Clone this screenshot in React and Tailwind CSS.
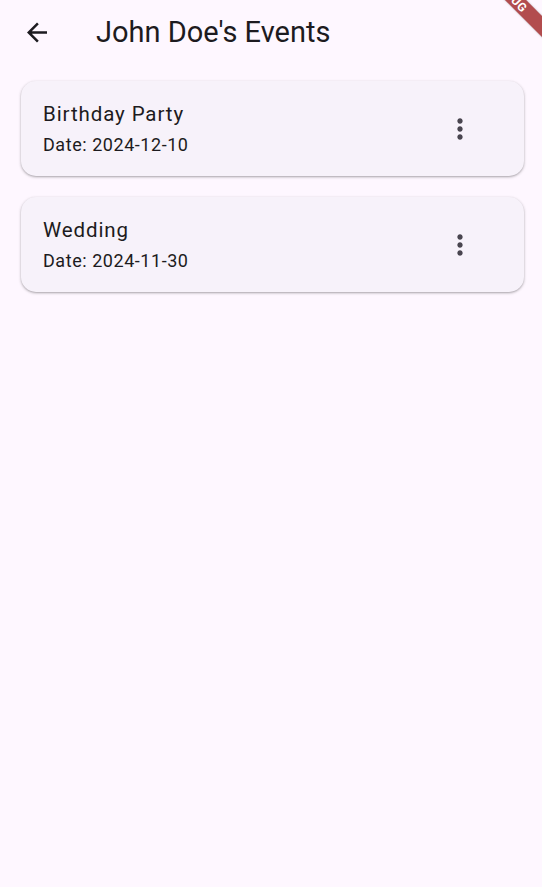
import React from "react";

function MoreVert() {
  return (
    <svg width="32" height="32" viewBox="0 0 24 24" fill="#49454f">
      <path d="M12 8c1.1 0 2-.9 2-2s-.9-2-2-2-2 .9-2 2 .9 2 2 2zm0 2c-1.1 0-2 .9-2 2s.9 2 2 2 2-.9 2-2-.9-2-2-2zm0 6c-1.1 0-2 .9-2 2s.9 2 2 2 2-.9 2-2-.9-2-2-2z" />
    </svg>
  );
}

function EventCard({ title, date }) {
  return (
    <div className="h-[95px] w-[503px] rounded-[15px] bg-[#f7f2fa] shadow-[0_1px_2px_rgba(0,0,0,0.25),0_1px_3px_1px_rgba(0,0,0,0.08)] flex items-start pl-[22px] pr-[48px]">
      <div className="flex-1 pt-[19px]">
        <div className="text-[20.5px] leading-[28px] tracking-[0.9px] text-[#1d1b20]">{title}</div>
        <div className="mt-[3px] text-[18px] leading-[28px] tracking-[0.55px] text-[#1d1b20]">{date}</div>
      </div>
      <div className="self-center flex items-center justify-center w-[32px] h-[32px]">
        <MoreVert />
      </div>
    </div>
  );
}

export default function App() {
  return (
    <div
      className="relative w-[542px] h-[887px] overflow-hidden bg-[#fef7ff]"
      style={{ fontFamily: "Roboto, 'Liberation Sans', sans-serif" }}
    >
      <div className="h-[64px] flex items-center">
        <div className="w-[30px] h-[30px] ml-[22px] flex items-center justify-center">
          <svg width="31" height="31" viewBox="0 0 24 24" fill="#1d1b20">
            <path d="M20 11H7.83l5.59-5.59L12 4l-8 8 8 8 1.41-1.41L7.83 13H20v-2z" />
          </svg>
        </div>
        <div className="ml-[44px] text-[29px] leading-[36px] text-[#1d1b20]">John Doe's Events</div>
      </div>
      <div className="pl-[21px] pt-[17px] flex flex-col gap-[21px]">
        <EventCard title="Birthday Party" date="Date: 2024-12-10" />
        <EventCard title="Wedding" date="Date: 2024-11-30" />
      </div>
      <div className="absolute left-[451px] top-[-12px] w-[120px] h-[15px] rotate-45 bg-[#b24c4e] shadow-[0_0_2px_rgba(0,0,0,0.3)] flex items-center justify-center">
        <span className="text-white text-[12px] font-bold leading-none tracking-[0.5px]">DEBUG</span>
      </div>
    </div>
  );
}
